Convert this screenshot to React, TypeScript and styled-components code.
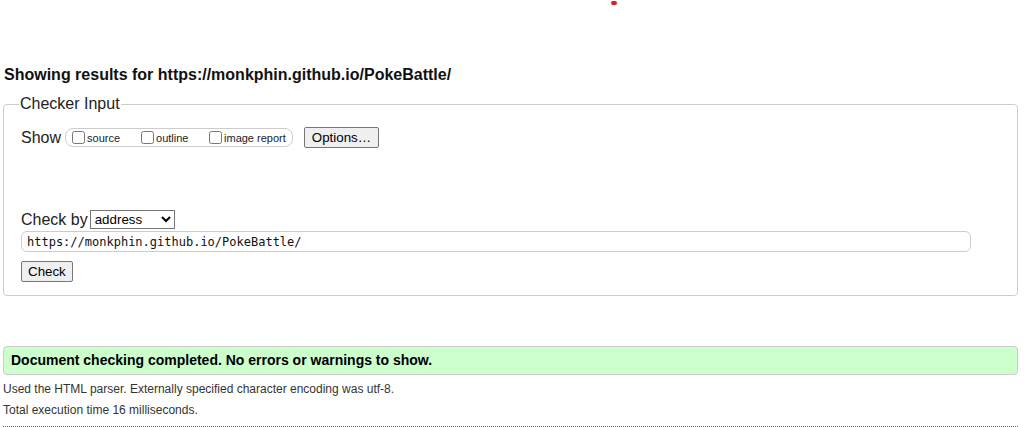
import React from 'react';
import styled, { createGlobalStyle } from 'styled-components';

const GlobalStyle = createGlobalStyle`
  body {
    margin: 0;
    background: #fff;
  }
`;

const Page = styled.div`
  padding: 0 6px 0 3px;
  font-family: "Liberation Sans", Arial, sans-serif;
  color: #000;
`;

const TopBar = styled.div`
  height: 64px;
  padding-left: 608px;
  box-sizing: border-box;
`;

const Dot = styled.div`
  width: 6px;
  height: 4px;
  margin-top: 1px;
  background: #e0201c;
  border-radius: 2px;
`;

const Heading = styled.h2`
  margin: 0 0 10px 1px;
  font-size: 16px;
  line-height: 20px;
  font-weight: bold;
  color: #111;
`;

const Fieldset = styled.fieldset`
  margin: 0;
  padding: 14px 17px 13px 17px;
  border: 1px solid #ccc;
  border-radius: 4px;
`;

const Legend = styled.legend`
  padding: 0 1px;
  margin-left: -2px;
  font-size: 16px;
  line-height: 18px;
  color: #222;
`;

const Row = styled.div<{ $gap?: number }>`
  display: flex;
  align-items: center;
  margin-top: ${({ $gap }) => $gap ?? 0}px;
`;

const Label = styled.span`
  font-size: 16px;
  line-height: 21px;
  color: #222;
`;

const OptionGroup = styled.div`
  display: flex;
  align-items: center;
  height: 17px;
  margin-left: 4px;
  padding: 0 6px 0 2px;
  border: 1px solid #ccc;
  border-radius: 8px;
`;

const Option = styled.label<{ $width: number }>`
  display: flex;
  align-items: center;
  width: ${({ $width }) => $width}px;
  font-size: 11px;
  color: #222;

  &:last-child {
    width: auto;
  }

  input {
    width: 13px;
    height: 13px;
    margin: 0 2px 0 4px;
  }
`;

const Button = styled.button<{ $ml?: number; $px?: number }>`
  height: 21px;
  margin-left: ${({ $ml }) => $ml ?? 0}px;
  padding: 1px ${({ $px }) => $px ?? 6}px;
  font-family: "Liberation Sans", Arial, sans-serif;
  font-size: 13.33px;
  color: #000;
  background: #efefef;
  border: 1px solid #767676;
  border-radius: 2px;
`;

const Select = styled.select`
  width: 85px;
  height: 19px;
  margin-left: 2px;
  font-family: "Liberation Sans", Arial, sans-serif;
  font-size: 13.33px;
  color: #000;
  border: 1px solid #767676;
  border-radius: 0;
  background: #fff;
`;

const UrlInput = styled.input`
  display: block;
  width: 950px;
  height: 21px;
  box-sizing: border-box;
  margin-top: 1px;
  padding: 0 5px;
  font-family: "DejaVu Sans Mono", "Liberation Mono", monospace;
  font-size: 12px;
  color: #111;
  border: 1px solid #ccc;
  border-radius: 6px;
  background: #fff;
`;

const Success = styled.div`
  margin-top: 50px;
  padding: 0 7px;
  height: 29px;
  box-sizing: border-box;
  line-height: 27px;
  font-size: 14px;
  font-weight: bold;
  background: #ccffcc;
  border: 1px solid #ccc;
  border-radius: 4px;
`;

const Info = styled.p`
  margin: 0;
  font-size: 12px;
  line-height: 21px;
  color: #333;

  &:first-of-type {
    margin-top: 4px;
  }
`;

const Rule = styled.hr`
  margin: 5px 0 0;
  border: 0;
  border-top: 1px dotted #666;
`;

const options = [
  { name: 'source', width: 69 },
  { name: 'outline', width: 68 },
  { name: 'image report', width: 0 },
];

const App: React.FC = () => {
  return (
    <Page>
      <GlobalStyle />
      <TopBar>
        <Dot />
      </TopBar>
      <Heading>Showing results for https://monkphin.github.io/PokeBattle/</Heading>
      <Fieldset>
        <Legend>Checker Input</Legend>
        <Row>
          <Label>Show</Label>
          <OptionGroup>
            {options.map((o) => (
              <Option key={o.name} $width={o.width}>
                <input type="checkbox" />
                {o.name}
              </Option>
            ))}
          </OptionGroup>
          <Button $ml={11} $px={7}>Options…</Button>
        </Row>
        <Row $gap={61}>
          <Label>Check by</Label>
          <Select defaultValue="address">
            <option value="address">address</option>
            <option value="file">file upload</option>
            <option value="text">text input</option>
          </Select>
        </Row>
        <UrlInput defaultValue="https://monkphin.github.io/PokeBattle/" />
        <Row $gap={9}>
          <Button>Check</Button>
        </Row>
      </Fieldset>
      <Success>Document checking completed. No errors or warnings to show.</Success>
      <Info>Used the HTML parser. Externally specified character encoding was utf-8.</Info>
      <Info>Total execution time 16 milliseconds.</Info>
      <Rule />
    </Page>
  );
};

export default App;
